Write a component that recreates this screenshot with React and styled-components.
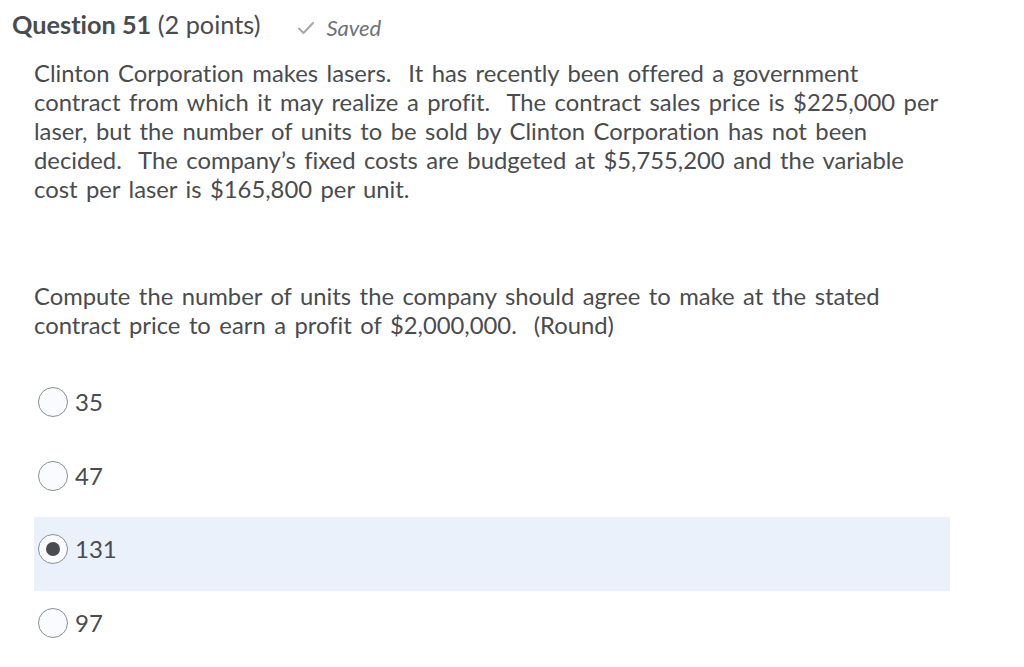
import React, { useState } from 'react';
import styled, { createGlobalStyle } from 'styled-components';

const GlobalStyle = createGlobalStyle`
  body {
    margin: 0;
    background: #ffffff;
    font-family: Lato, "Open Sans", sans-serif;
    font-variant-ligatures: none;
    color: #494c4e;
  }
`;

const options = ['35', '47', '131', '97'];

const App = () => {
  const [selected, setSelected] = useState('131');

  return (
    <Page>
      <GlobalStyle />
      <Header>
        <Title>
          <strong>Question 51</strong> (2 points)
        </Title>
        <SavedNote>
          <svg width="18" height="14" viewBox="0 0 18 14" fill="none">
            <path d="M2 7.5 L6.5 12 L16 2" stroke="#a3a8ab" strokeWidth="2" strokeLinecap="round" strokeLinejoin="round" />
          </svg>
          <span>Saved</span>
        </SavedNote>
      </Header>
      <Body>
        <Paragraph>
          Clinton Corporation makes lasers.&nbsp; It has recently been offered a government<br />
          contract from which it may realize a profit.&nbsp; The contract sales price is $225,000 per<br />
          laser, but the number of units to be sold by Clinton Corporation has not been<br />
          decided.&nbsp; The company’s fixed costs are budgeted at $5,755,200 and the variable<br />
          cost per laser is $165,800 per unit.
        </Paragraph>
        <Paragraph $gap>
          Compute the number of units the company should agree to make at the stated<br />
          contract price to earn a profit of $2,000,000.&nbsp; (Round)
        </Paragraph>
        <OptionList>
          {options.map(opt => (
            <OptionRow
              key={opt}
              $active={selected === opt}
              onClick={() => setSelected(opt)}
            >
              <Radio $checked={selected === opt} />
              <OptionLabel>{opt}</OptionLabel>
            </OptionRow>
          ))}
        </OptionList>
      </Body>
    </Page>
  );
};

const Page = styled.div`
  padding: 8px 0 0 12px;
  width: 1012px;
`;

const Header = styled.div`
  display: flex;
  align-items: baseline;
  gap: 37px;
  height: 32px;
`;

const Title = styled.h2`
  margin: 0;
  font-size: 25.3px;
  font-weight: 400;
  line-height: 32px;
  color: #494c4e;
  white-space: nowrap;
  strong {
    font-weight: 700;
  }
`;

const SavedNote = styled.div`
  display: flex;
  align-items: center;
  gap: 11px;
  font-size: 22px;
  font-style: italic;
  color: #6e7376;
  svg {
    position: relative;
    top: 1px;
  }
`;

const Body = styled.div`
  padding: 18.5px 0 0 22px;
`;

const Paragraph = styled.p`
  margin: ${p => (p.$gap ? '78px' : '0')} 0 0;
  width: 960px;
  font-size: 23.8px;
  line-height: 29px;
  word-spacing: 2.4px;
  white-space: nowrap;
`;

const OptionList = styled.div`
  margin-top: 30.5px;
  width: 916px;
`;

const OptionRow = styled.label`
  display: flex;
  align-items: flex-start;
  gap: 7px;
  height: 73.5px;
  box-sizing: border-box;
  padding: 17px 0 0 4px;
  background: ${p => (p.$active ? '#eaf1fb' : 'transparent')};
  cursor: pointer;
`;

const Radio = styled.span`
  position: relative;
  width: 30px;
  height: 30px;
  box-sizing: border-box;
  border: 1px solid #8a8f92;
  border-radius: 50%;
  background: #f9fbff;
  flex-shrink: 0;
  &::after {
    content: '';
    display: ${p => (p.$checked ? 'block' : 'none')};
    position: absolute;
    left: 7px;
    top: 7px;
    width: 14px;
    height: 14px;
    border-radius: 50%;
    background: #494c4e;
  }
`;

const OptionLabel = styled.span`
  font-size: 24px;
  line-height: 30px;
`;

export default App;
